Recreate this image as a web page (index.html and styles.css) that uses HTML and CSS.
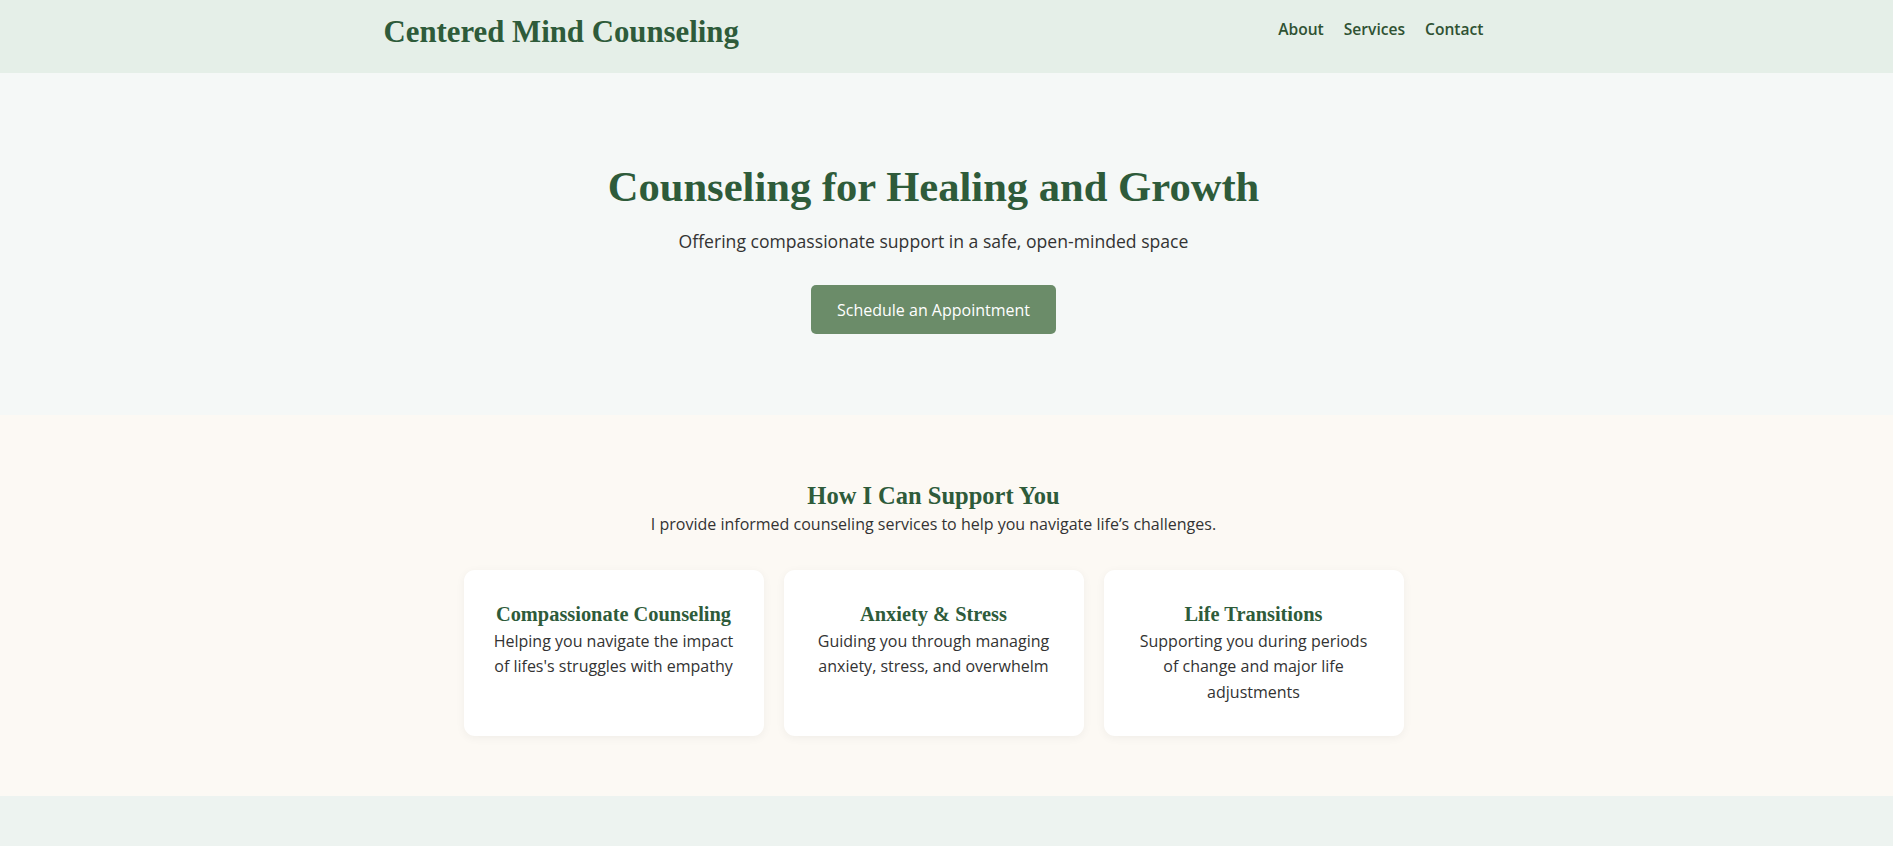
FILE: index.html
```html
<!DOCTYPE html>
<html lang="en">
<head>
<meta charset="utf-8">
<title>Centered Mind Counseling</title>
<link rel="stylesheet" href="styles.css">
</head>
<body>
<header class="site-header">
  <div class="container header-inner">
    <div class="logo">Centered Mind Counseling</div>
    <nav class="nav">
      <a href="#about">About</a>
      <a href="#services">Services</a>
      <a href="#contact">Contact</a>
    </nav>
  </div>
</header>

<section class="hero">
  <h1 class="hero-title">Counseling for Healing and Growth</h1>
  <p class="hero-sub">Offering compassionate support in a safe, open-minded space</p>
  <a class="btn" href="#contact">Schedule an Appointment</a>
</section>

<section class="services" id="services">
  <h2 class="section-title">How I Can Support You</h2>
  <p class="section-sub">I provide informed counseling services to help you navigate life’s challenges.</p>
  <div class="cards">
    <div class="card">
      <h3 class="card-title">Compassionate Counseling</h3>
      <p class="card-text">Helping you navigate the impact of lifes's struggles with empathy</p>
    </div>
    <div class="card">
      <h3 class="card-title">Anxiety &amp; Stress</h3>
      <p class="card-text">Guiding you through managing anxiety, stress, and overwhelm</p>
    </div>
    <div class="card">
      <h3 class="card-title">Life Transitions</h3>
      <p class="card-text">Supporting you during periods of change and major life adjustments</p>
    </div>
  </div>
</section>

<section class="about" id="about"></section>
</body>
</html>
```

FILE: styles.css
```css
* { box-sizing: border-box; }

html, body {
  margin: 0;
  padding: 0;
}

body {
  font-family: "Open Sans", "Liberation Sans", sans-serif;
  color: #333333;
  background: #edf3f0;
}

.container {
  width: 1100px;
  margin: 0 auto;
}

/* Header */
.site-header {
  background: #e5efe8;
  height: 73px;
  padding: 14px 26px 0 0;
}

.header-inner {
  display: flex;
  justify-content: space-between;
  align-items: flex-start;
}

.logo {
  font-family: "Liberation Serif", "Times New Roman", serif;
  font-weight: 700;
  font-size: 30.8px;
  line-height: 37px;
  color: #2e5b3a;
}

.nav {
  display: flex;
  gap: 20px;
  padding-top: 3px;
}

.nav a {
  font-size: 15.6px;
  line-height: 24px;
  font-weight: 600;
  color: #2f5233;
  text-decoration: none;
}

/* Hero */
.hero {
  background: #f5f8f7;
  padding: 79px 26px 81px 0;
  text-align: center;
}

.hero-title {
  margin: 9px 0 0;
  font-family: "Liberation Serif", "Times New Roman", serif;
  font-weight: 700;
  font-size: 42.6px;
  line-height: 51px;
  color: #2e5b3a;
}

.hero-sub {
  margin: 14.5px 0 0;
  font-size: 17.6px;
  line-height: 28.8px;
  color: #333333;
}

.btn {
  display: inline-block;
  margin-top: 30px;
  padding: 12.5px 25.5px;
  background: #6b8c69;
  color: #ffffff;
  font-size: 16px;
  line-height: 24px;
  text-decoration: none;
  border-radius: 5px;
}

/* Services */
.services {
  background: #fcf9f4;
  padding: 67px 26px 60px 0;
  text-align: center;
}

.section-title {
  margin: 0;
  font-family: "Liberation Serif", "Times New Roman", serif;
  font-weight: 700;
  font-size: 24.5px;
  line-height: 28px;
  color: #2e5b3a;
}

.section-sub {
  margin: 2px 0 0;
  font-size: 16px;
  line-height: 25.6px;
  color: #333333;
}

.cards {
  display: grid;
  grid-template-columns: repeat(3, 300px);
  gap: 20px;
  justify-content: center;
  margin-top: 32px;
}

.card {
  background: #ffffff;
  border-radius: 11px;
  padding: 30px 30px 30px;
  box-shadow: 0 2px 10px rgba(0, 0, 0, 0.05);
}

.card-title {
  margin: 0 0 1px;
  font-family: "Liberation Serif", "Times New Roman", serif;
  font-weight: 700;
  font-size: 20.4px;
  line-height: 28px;
  color: #2e5b3a;
}

.card-text {
  margin: 0;
  font-size: 16px;
  line-height: 25.6px;
  color: #333333;
}

/* Below */
.about {
  background: #edf3f0;
  min-height: 200px;
}
```
